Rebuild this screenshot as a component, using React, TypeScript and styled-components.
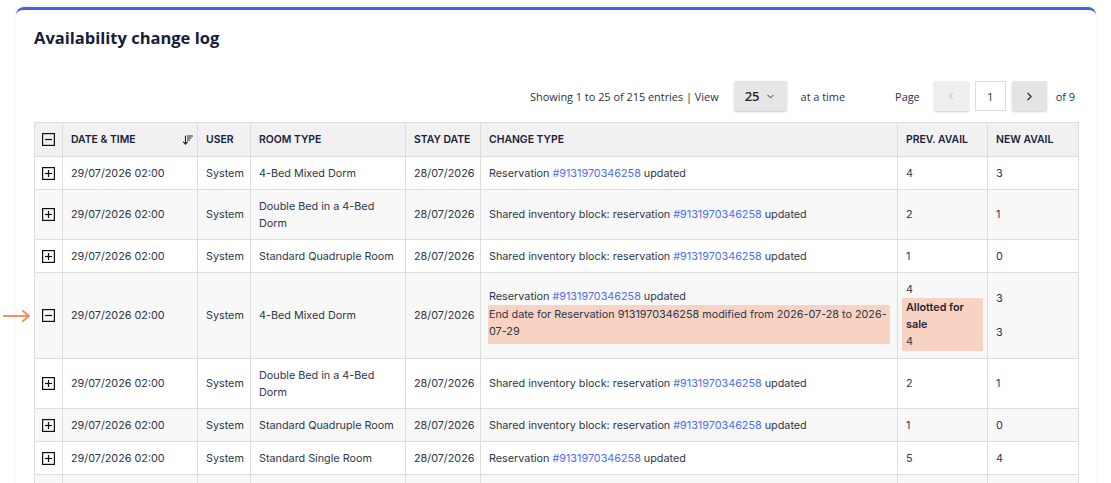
import React from "react";
import styled, { createGlobalStyle } from "styled-components";
import { ArrowDownWideNarrow, ChevronDown, ChevronLeft, ChevronRight } from "lucide-react";

const Global = createGlobalStyle`
  html, body { margin: 0; padding: 0; background: #ffffff; }
  body { font-family: "Inter", "Liberation Sans", sans-serif; overflow: hidden; }
  * { box-sizing: border-box; }
`;

const Page = styled.div`
  padding: 7px 15px 0 16px;
  height: 483px;
  overflow: hidden;
`;

const Card = styled.section`
  background: #fff;
  border-top: 3px solid #3d64e8;
  border-radius: 8px 8px 0 0;
  box-shadow: 0 0 5px rgba(0, 0, 0, 0.07);
  padding: 16px 18px 0 18px;
  min-height: 476px;
`;

const Title = styled.h1`
  margin: 0;
  font-family: "Open Sans", "Liberation Sans", sans-serif;
  font-weight: 700;
  font-size: 16.5px;
  line-height: 24px;
  color: #141d3a;
`;

const Controls = styled.div`
  margin-top: 31px;
  display: flex;
  align-items: center;
  justify-content: flex-end;
  height: 30px;
  padding-right: 3px;
  font-family: "Open Sans", "Liberation Sans", sans-serif;
  font-size: 10.9px;
  color: #2a3145;
`;

const Label = styled.span<{ $ml?: number }>`
  margin-left: ${(p) => p.$ml ?? 0}px;
  white-space: nowrap;
`;

const SelectBox = styled.div`
  margin-left: 15px;
  width: 53px;
  height: 30px;
  background: #e6e6e6;
  border-radius: 2px;
  box-shadow: 0 1px 2px rgba(0, 0, 0, 0.22);
  display: flex;
  align-items: center;
  justify-content: center;
  gap: 5px;
  font-size: 13px;
  font-weight: 600;
  color: #1e2438;
`;

const PageBtn = styled.div<{ $disabled?: boolean }>`
  width: 35px;
  height: 30px;
  border-radius: 2px;
  background: ${(p) => (p.$disabled ? "#efefef" : "#e4e4e4")};
  color: ${(p) => (p.$disabled ? "#a4a4a4" : "#2a2f3d")};
  box-shadow: 0 1px 2px rgba(0, 0, 0, 0.2);
  display: flex;
  align-items: center;
  justify-content: center;
`;

const PageInput = styled.div`
  width: 31px;
  height: 30px;
  border: 1px solid #dcdcdc;
  background: #fff;
  display: flex;
  align-items: center;
  justify-content: center;
  font-size: 11.5px;
`;

const Pager = styled.div`
  display: flex;
  align-items: center;
  gap: 6px;
  margin-left: 14px;
`;

const Table = styled.table`
  margin-top: 11px;
  width: 1044px;
  border-collapse: collapse;
  table-layout: fixed;
  font-size: 10.8px;
  line-height: 17px;
  color: #2e3649;
`;

const Th = styled.th<{ $w: number }>`
  width: ${(p) => p.$w}px;
  background: #f1f1f1;
  border: 1px solid #dddddd;
  padding: 8px 8px;
  text-align: left;
  font-size: 10.4px;
  font-weight: 600;
  text-transform: uppercase;
  white-space: nowrap;
  color: #1a223b;
`;

const ThFlex = styled.div`
  display: flex;
  align-items: center;
  justify-content: space-between;
  margin-right: -5px;
`;

const Tr = styled.tr<{ $alt: boolean }>`
  background: ${(p) => (p.$alt ? "#f8f8f8" : "#ffffff")};
`;

const Td = styled.td`
  border: 1px solid #dddddd;
  padding: 7.5px 8px;
  vertical-align: middle;
  position: relative;
`;

const IconCell = styled(Td)`
  padding: 7.5px 7px;
`;

const Link = styled.span`
  color: #4d6ef2;
`;

const Highlight = styled.div<{ $wide?: boolean }>`
  background: #f8d3c4;
  margin: ${(p) => (p.$wide ? "0 -4px" : "0 -1px")};
  padding: ${(p) => (p.$wide ? "1px 4px" : "1px 1px 4px")};
`;

const Bold = styled.div`
  font-weight: 600;
  color: #1f2638;
`;

const Blank = styled.div`
  height: 17px;
`;

const Pointer = styled.svg`
  position: absolute;
  left: -32px;
  top: 50%;
  transform: translateY(-50%);
`;

const Box = ({ minus }: { minus?: boolean }) => (
  <svg width="13" height="13" viewBox="0 0 13 13" style={{ display: "block" }}>
    <rect x="0.6" y="0.6" width="11.8" height="11.8" fill="none" stroke="#111" strokeWidth="1.2" />
    <line x1="3" y1="6.5" x2="10" y2="6.5" stroke="#111" strokeWidth="1.2" />
    {!minus && <line x1="6.5" y1="3" x2="6.5" y2="10" stroke="#111" strokeWidth="1.2" />}
  </svg>
);

const RES = "#9131970346258";

type Row = {
  room: string;
  change: React.ReactNode;
  prev: React.ReactNode;
  next: React.ReactNode;
  expanded?: boolean;
};

const resv = (
  <>
    Reservation <Link>{RES}</Link> updated
  </>
);
const shared = (
  <>
    Shared inventory block: reservation <Link>{RES}</Link> updated
  </>
);

const rows: Row[] = [
  { room: "4-Bed Mixed Dorm", change: resv, prev: "4", next: "3" },
  { room: "Double Bed in a 4-Bed Dorm", change: shared, prev: "2", next: "1" },
  { room: "Standard Quadruple Room", change: shared, prev: "1", next: "0" },
  {
    room: "4-Bed Mixed Dorm",
    expanded: true,
    change: (
      <>
        <div>{resv}</div>
        <Highlight>End date for Reservation 9131970346258 modified from 2026-07-28 to 2026-07-29</Highlight>
      </>
    ),
    prev: (
      <>
        <div>4</div>
        <Highlight $wide>
          <Bold>Allotted for sale</Bold>
          <div>4</div>
        </Highlight>
      </>
    ),
    next: (
      <>
        <div>3</div>
        <Blank />
        <div>3</div>
      </>
    ),
  },
  { room: "Double Bed in a 4-Bed Dorm", change: shared, prev: "2", next: "1" },
  { room: "Standard Quadruple Room", change: shared, prev: "1", next: "0" },
  { room: "Standard Single Room", change: resv, prev: "5", next: "4" },
  { room: "Standard Single Room", change: resv, prev: "5", next: "4" },
];

export default function App() {
  return (
    <>
      <Global />
      <Page>
        <Card>
          <Title>Availability change log</Title>
          <Controls>
            <Label>Showing 1 to 25 of 215 entries | View</Label>
            <SelectBox>
              25 <ChevronDown size={11} strokeWidth={2} />
            </SelectBox>
            <Label $ml={14}>at a time</Label>
            <Label $ml={50}>Page</Label>
            <Pager>
              <PageBtn $disabled>
                <ChevronLeft size={12} strokeWidth={1.6} />
              </PageBtn>
              <PageInput>1</PageInput>
              <PageBtn>
                <ChevronRight size={13} strokeWidth={2.2} />
              </PageBtn>
            </Pager>
            <Label $ml={9}>of 9</Label>
          </Controls>
          <Table>
            <thead>
              <tr>
                <Th $w={28} style={{ padding: "8px 7px" }}>
                  <Box minus />
                </Th>
                <Th $w={135}>
                  <ThFlex>
                    <span>Date &amp; Time</span>
                    <ArrowDownWideNarrow size={12} strokeWidth={2.2} color="#1a223b" />
                  </ThFlex>
                </Th>
                <Th $w={53}>User</Th>
                <Th $w={155}>Room type</Th>
                <Th $w={75}>Stay date</Th>
                <Th $w={417}>Change type</Th>
                <Th $w={90}>Prev. avail</Th>
                <Th $w={91}>New avail</Th>
              </tr>
            </thead>
            <tbody>
              {rows.map((r, i) => (
                <Tr key={i} $alt={i % 2 === 1}>
                  <IconCell>
                    {r.expanded && (
                      <Pointer width="28" height="12" viewBox="0 0 28 12">
                        <line x1="1" y1="6" x2="26" y2="6" stroke="#f4915f" strokeWidth="2" strokeLinecap="round" />
                        <polyline points="20,1 26,6 20,11" fill="none" stroke="#f4915f" strokeWidth="2" strokeLinecap="round" strokeLinejoin="round" />
                      </Pointer>
                    )}
                    <Box minus={r.expanded} />
                  </IconCell>
                  <Td>29/07/2026 02:00</Td>
                  <Td>System</Td>
                  <Td>{r.room}</Td>
                  <Td>28/07/2026</Td>
                  <Td>{r.change}</Td>
                  <Td>{r.prev}</Td>
                  <Td>{r.next}</Td>
                </Tr>
              ))}
            </tbody>
          </Table>
        </Card>
      </Page>
    </>
  );
}
